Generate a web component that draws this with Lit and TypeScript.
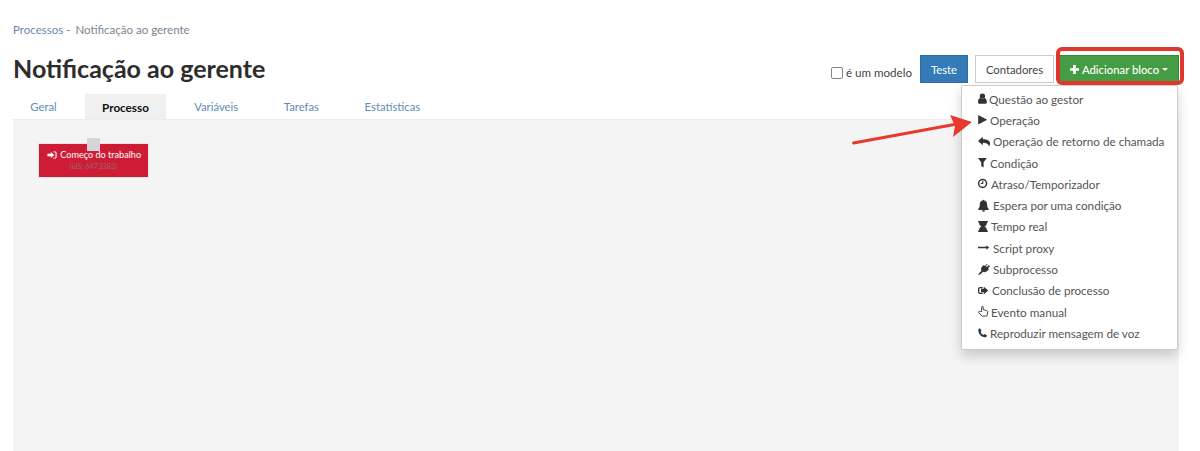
import { LitElement, html, css, svg } from "lit";
import { customElement } from "lit/decorators.js";

const icons: Record<string, any> = {
  user: svg`<circle cx="4.400" cy="4.100" r="2.700"/><path d="M0 10.500c0-2.700.6-4.100 2.300-4.500.6.500 1.300.8 2.100.8s1.500-.3 2.100-.8c1.700.4 2.300 1.800 2.300 4.500 0 .8-.5 1.200-1.200 1.200H1.200C.5 11.700 0 11.300 0 10.500z"/>`,
  play: svg`<path d="M.2 2 9.200 6.700.2 11.400z"/>`,
  reply: svg`<path d="M4.800 1.800 0 6l4.800 4.200V7.700c3.200 0 5.300.6 6.200 3.600.8-1 1.100-2.200 1-3.300C11.800 5.400 9.300 4.200 4.800 4.200z"/>`,
  filter: svg`<path d="M0 2h8.800L5.600 6.300v5.200L3.200 10V6.300z"/>`,
  clock: svg`<path fill-rule="evenodd" d="M4.600 1.800a4.700 4.700 0 1 0 0 9.400 4.700 4.700 0 0 0 0-9.400zm0 1.500a3.200 3.200 0 1 1 0 6.400 3.200 3.200 0 0 1 0-6.400z"/><path d="M4.200 4h1.100v3.100H2.800V6.100h1.400z"/>`,
  bell: svg`<path d="M5.500.8c.4 0 .7.300.7.700 1.900.3 2.900 1.800 2.900 3.800 0 2.600.6 3.700 1.600 4.800v.8H.2v-.8c1-1.100 1.600-2.200 1.600-4.800 0-2 1-3.500 2.900-3.800 0-.4.300-.7.800-.7z"/><path d="M4 11.200h3a1.500 1.500 0 0 1-3 0z"/>`,
  hourglass: svg`<path d="M.2 1h9.600v1.500H9c0 2.200-1.200 3.300-2.500 4 1.300.7 2.500 1.800 2.500 4h.8V12H.2v-1.500H1c0-2.200 1.200-3.300 2.500-4C2.200 5.800 1 4.700 1 2.500H.2z"/>`,
  arrow: svg`<path d="M0 5.800h8.400V4.300l2.800 2.200-2.800 2.200V7.200H0z"/>`,
  plug: svg`<path d="M8.700 1 6.800 3 5.900 2 3.900 3.800C2.900 5 2.800 6.500 3.500 7.800L1.500 9.800 0 12.300l2.800-1.400 2.200-2.100c1.400.7 3.100.4 4.300-.8l1.700-1.700-1-1 2-2-1.200-1.200-2 2-1-1 2-2z"/>`,
  exit: svg`<path d="M2 3h2.700v1.200H2.300c-.6 0-1 .4-1 1v2.600c0 .6.400 1 1 1h2.400V10H2C.8 10 0 9.200 0 8V5c0-1.200.8-2 2-2z"/><path d="M5.800 2.700 10.300 6.500 5.800 10.300V8.200H3V4.800h2.800z"/>`,
  hand: svg`<path fill="none" stroke="currentColor" stroke-width=".9" d="M3.700 6.500V2c0-1 1.500-1 1.500 0v2.600l3.100.9c1.100.3 1.500.8 1.400 1.600l-.5 3.100-.6.9H4.200L.8 7.800c-.7-1.100.5-2.100 1.500-1.300z"/>`,
  phone: svg`<path d="M1.900 2.200 3.600 4.700 2.600 5.900c.5 1.300 1.500 2.300 2.900 3l1.200-1 2.300 1.600c-.3 1.200-1 1.900-2.200 1.800C3.200 11.100.4 8 .3 4.300.3 3.200.8 2.500 1.900 2.200z"/>`,
  signin: svg`<path d="M4.500 2.500 9 6.500 4.500 10.500V8H0V5h4.500z"/><path d="M7.500 1.800h2.300c1.300 0 2.200.8 2.200 2v5.400c0 1.200-.9 2-2.200 2H7.500V10h2.100c.6 0 1-.4 1-1V4c0-.6-.4-1-1-1H7.500z"/>`,
};

const ic = (name: string, w = 13) =>
  html`<svg class="ic" style="width:${w}px" viewBox="0 0 ${w} 13" fill="currentColor" aria-hidden="true">${icons[name]}</svg>`;

const menu: [string, number, string][] = [
  ["user", 9, "Questão ao gestor"],
  ["play", 10, "Operação"],
  ["reply", 13, "Operação de retorno de chamada"],
  ["filter", 10, "Condição"],
  ["clock", 11, "Atraso/Temporizador"],
  ["bell", 13, "Espera por uma condição"],
  ["hourglass", 11, "Tempo real"],
  ["arrow", 13, "Script proxy"],
  ["plug", 13, "Subprocesso"],
  ["exit", 12, "Conclusão de processo"],
  ["hand", 11, "Evento manual"],
  ["phone", 10, "Reproduzir mensagem de voz"],
];

@customElement("app-root")
export class AppRoot extends LitElement {
  static styles = css`
    :host {
      display: block;
      position: relative;
      width: 1200px;
      height: 451px;
      overflow: hidden;
      background: #fff;
      font-family: "Lato", "Liberation Sans", sans-serif;
      font-size: 11.6px;
      color: #333;
    }
    .page {
      display: flex;
      flex-direction: column;
      height: 100%;
      padding: 23px 21px 0 13px;
      box-sizing: border-box;
    }
    .crumbs {
      display: flex;
      gap: 5px;
      height: 14px;
      line-height: 14px;
      font-size: 11.5px;
      color: #7a8590;
      white-space: nowrap;
    }
    .crumbs a { color: #6c88ad; }
    .head {
      display: flex;
      justify-content: space-between;
      align-items: flex-start;
      height: 39px;
      margin-top: 18px;
    }
    h1 {
      margin: 0;
      font-size: 25px;
      line-height: 26px;
      font-weight: 700;
      color: #2d2d2d;
      white-space: nowrap;
    }
    .actions { display: flex; align-items: flex-start; }
    .model {
      display: flex;
      align-items: center;
      gap: 3px;
      margin-top: 11px;
      margin-right: 8px;
      color: #444;
    }
    .check {
      width: 10px;
      height: 10px;
      border: 1px solid #858585;
      border-radius: 2px;
      background: #fff;
    }
    .btn {
      box-sizing: border-box;
      height: 28px;
      display: flex;
      align-items: center;
      justify-content: center;
      font-size: 11.3px;
      white-space: nowrap;
    }
    .blue { width: 48px; background: #337ab7; border: 1px solid #2e6da4; color: #fff; margin-right: 7px; }
    .plain { width: 79px; background: #fff; border: 1px solid #ccc; color: #444; margin-right: 5px; }
    .green { width: 120px; background: #449d44; border: 1px solid #398439; color: #fff; font-weight: 500; gap: 3px; }
    .plus { width: 9px; height: 9px; fill: #fff; }
    .caret {
      width: 0;
      height: 0;
      border-left: 3px solid transparent;
      border-right: 3px solid transparent;
      border-top: 3px solid #fff;
    }
    .tabs { display: flex; gap: 11px; height: 25px; }
    .tab {
      display: flex;
      align-items: center;
      padding: 0 17.300px;
      font-size: 11.3px;
      color: #5f8bb5;
      white-space: nowrap;
    }
    .tab.on { background: #f0f0f0; color: #111; font-size: 11.7px; font-weight: 700; padding: 0 17px; }
    .canvas {
      position: relative;
      flex: 1;
      background: #f4f4f4;
      border-top: 1px solid #ececec;
    }
    .node {
      position: absolute;
      left: 25px;
      top: 23px;
      width: 111px;
      height: 35px;
      box-sizing: border-box;
      border: 1px solid #e5e5e5;
      background: #cf1c35;
      color: #fff;
      text-align: center;
      font-size: 9.100px;
      line-height: 12px;
      padding-top: 5px;
    }
    .node .ic { height: 10px; vertical-align: -1.500px; }
    .node small { display: block; font-size: 7.400px; color: #96656f; line-height: 12px; }
    .port {
      position: absolute;
      left: 74px;
      top: 18px;
      width: 13px;
      height: 13px;
      background: #d8d4dc;
    }
    .menu {
      position: absolute;
      left: 961px;
      top: 85px;
      width: 217px;
      height: 265px;
      box-sizing: border-box;
      background: #fff;
      border: 1px solid #ccc;
      border-radius: 2px;
      box-shadow: 0 6px 12px rgba(0, 0, 0, .175);
      padding: 2px 0;
    }
    .item {
      display: flex;
      align-items: center;
      gap: 2px;
      height: 21.300px;
      padding-left: 16px;
      color: #555;
      font-size: 11.7px;
      white-space: nowrap;
    }
    .item .ic { height: 13px; color: #333; flex: none; overflow: visible; }
    .hl {
      position: absolute;
      left: 1056px;
      top: 47px;
      width: 128px;
      height: 38px;
      box-sizing: border-box;
      border: 4px solid #e0362c;
      border-radius: 6px;
    }
    .pointer { position: absolute; left: 845px; top: 105px; }
  `;

  render() {
    return html`
      <div class="page">
        <div class="crumbs"><a>Processos -</a><span>Notificação ao gerente</span></div>
        <div class="head">
          <h1>Notificação ao gerente</h1>
          <div class="actions">
            <label class="model"><span class="check"></span>é um modelo</label>
            <div class="btn blue">Teste</div>
            <div class="btn plain">Contadores</div>
            <div class="btn green">
              <svg class="plus" viewBox="0 0 10 10"><path d="M3.500 0h3v3.500H10v3H6.500V10h-3V6.500H0v-3h3.500z"/></svg>
              Adicionar bloco<span class="caret"></span>
            </div>
          </div>
        </div>
        <div class="tabs">
          ${["Geral", "Processo", "Variáveis", "Tarefas", "Estatísticas"].map(
            (t) => html`<div class="tab ${t === "Processo" ? "on" : ""}">${t}</div>`,
          )}
        </div>
        <div class="canvas">
          <div class="node">${ic("signin", 12)} Começo do trabalho<small>(idS: 6473383)</small></div>
          <div class="port"></div>
        </div>
      </div>
      <div class="menu">
        ${menu.map(([i, w, t]) => html`<div class="item">${ic(i, w)}<span>${t}</span></div>`)}
      </div>
      <div class="hl"></div>
      <svg class="pointer" width="130" height="45" viewBox="0 0 130 45" aria-hidden="true">
        <path d="M8.500 38 112 19" stroke="#e8392d" stroke-width="2.800" stroke-linecap="round" fill="none"/>
        <path d="M127 17 105 10 110 21 108 32z" fill="#e8392d"/>
      </svg>
    `;
  }
}
